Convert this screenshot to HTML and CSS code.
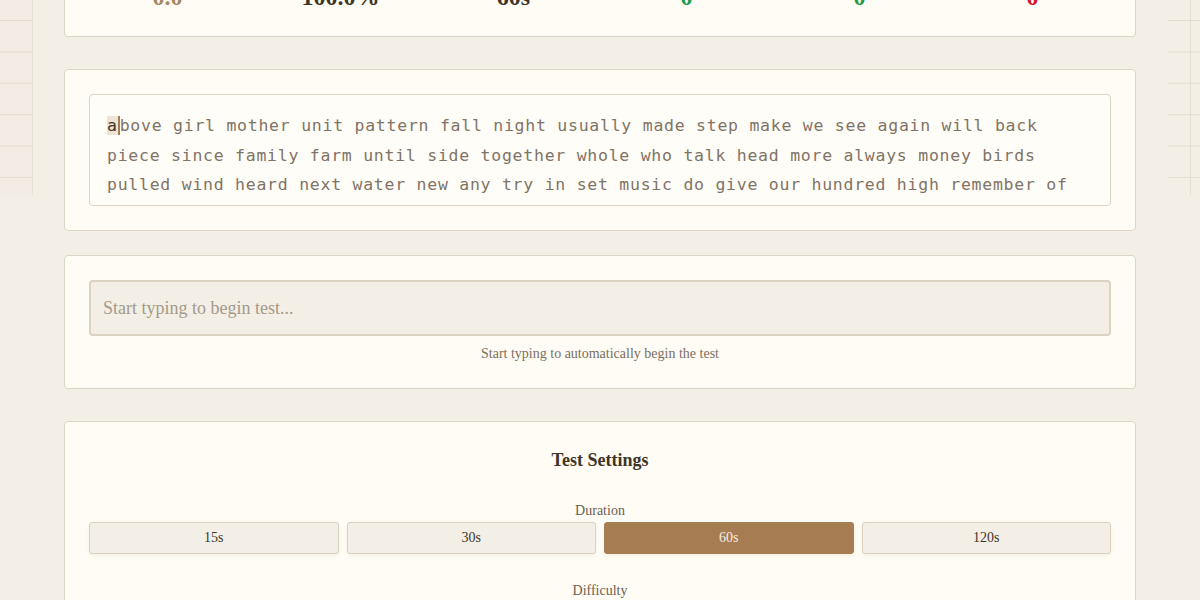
FILE: index.html
```html
<!DOCTYPE html>
<html lang="en">
<head>
    <meta charset="UTF-8">
    <meta name="viewport" content="width=device-width, initial-scale=1.0">
    <title>Typing Test</title>
    <link rel="stylesheet" href="styles.css">
</head>
<body>
    <div class="margin-lines margin-left"></div>
    <div class="margin-lines margin-right"></div>

    <main class="container">
        <section class="card stats">
            <div class="stat">
                <span class="stat-label">WPM</span>
                <span class="stat-value wpm">0.0</span>
            </div>
            <div class="stat">
                <span class="stat-label">Accuracy</span>
                <span class="stat-value">100.0%</span>
            </div>
            <div class="stat">
                <span class="stat-label">Time</span>
                <span class="stat-value">60s</span>
            </div>
            <div class="stat">
                <span class="stat-label">Words</span>
                <span class="stat-value good">0</span>
            </div>
            <div class="stat">
                <span class="stat-label">Correct</span>
                <span class="stat-value good">0</span>
            </div>
            <div class="stat">
                <span class="stat-label">Errors</span>
                <span class="stat-value bad">0</span>
            </div>
        </section>

        <section class="card text-card">
            <div class="text-display"><span class="current">a</span>bove girl mother unit pattern fall night usually made step make we see again will back piece since family farm until side together whole who talk head more always money birds pulled wind heard next water new any try in set music do give our hundred high remember of change light place work those line between start</div>
        </section>

        <section class="card input-card">
            <input type="text" class="typing-input" placeholder="Start typing to begin test...">
            <p class="hint">Start typing to automatically begin the test</p>
        </section>

        <section class="card settings">
            <h2 class="settings-title">Test Settings</h2>
            <div class="setting-group">
                <div class="setting-label">Duration</div>
                <div class="options">
                    <button class="option">15s</button>
                    <button class="option">30s</button>
                    <button class="option active">60s</button>
                    <button class="option">120s</button>
                </div>
            </div>
            <div class="setting-group">
                <div class="setting-label">Difficulty</div>
                <div class="options">
                    <button class="option">Easy</button>
                    <button class="option active">Medium</button>
                    <button class="option">Hard</button>
                    <button class="option">Expert</button>
                </div>
            </div>
        </section>
    </main>
</body>
</html>
```

FILE: styles.css
```css
html, body {
    margin: 0;
    overflow: hidden;
}
body {
    background-color: #f3efe6;
    font-family: "Liberation Serif", "Times New Roman", serif;
    color: #3d3528;
}
/* notebook paper in the page margins */
.margin-lines {
    position: absolute;
    top: 0;
    width: 32px;
    height: 195px;
    background-image: linear-gradient(#e6ddd0 1px, transparent 1px);
    background-size: 100% 31.4px;
    background-position: 0 20px;
}
.margin-left {
    left: 0;
    background-color: #f2ece4;
    border-right: 1px solid #e8e0d3;
}
.margin-right {
    right: 0;
}
.margin-right::after {
    content: "";
    position: absolute;
    top: 0;
    bottom: 0;
    left: 22px;
    width: 1px;
    background: #e6ddd0;
}
.container {
    max-width: 1072px;
    margin: -67px auto 0;
}
.card {
    background-color: #fffcf5;
    border: 1px solid #ddd5c6;
    border-radius: 4px;
    padding: 24px;
}
.stats {
    display: grid;
    grid-template-columns: repeat(6, 1fr);
    gap: 16px;
    margin-bottom: 32px;
}
.stat {
    display: flex;
    flex-direction: column;
    align-items: center;
}
.stat-label {
    font-size: 14px;
    line-height: 20px;
    color: #7a6e60;
    margin-bottom: 4px;
}
.stat-value {
    font-size: 24px;
    line-height: 30px;
    font-weight: bold;
    color: #3d3528;
}
.stat-value.wpm {
    color: #a5865e;
}
.stat-value.good {
    color: #1e9a4b;
}
.stat-value.bad {
    color: #d0142c;
}
.text-card {
    margin-bottom: 24px;
}
.text-display {
    box-sizing: border-box;
    height: 112px;
    overflow: hidden;
    padding: 16px 17px 0;
    border: 1px solid #ddd5c6;
    border-radius: 4px;
    background-color: #fffdf8;
    font-family: "DejaVu Sans Mono", monospace;
    font-size: 16.5px;
    letter-spacing: 0.74px;
    line-height: 29.5px;
    color: #7f7366;
}
.current {
    background-color: #ede4d5;
    color: #3d3528;
    border-right: 2px solid #a67c52;
}
.input-card {
    margin-bottom: 32px;
}
.typing-input {
    display: block;
    box-sizing: border-box;
    width: 100%;
    height: 56px;
    padding: 0 12px;
    border: 2px solid #dcd2c1;
    border-radius: 4px;
    background-color: #f3efe6;
    font-family: "Liberation Serif", serif;
    font-size: 18px;
    color: #3d3528;
    outline: none;
}
.typing-input::placeholder {
    color: #a59a8a;
}
.hint {
    margin: 8px 0 0;
    text-align: center;
    font-size: 14px;
    line-height: 20px;
    color: #7a6e60;
}
.settings-title {
    margin: 0 0 27px;
    text-align: center;
    font-size: 18px;
    line-height: 28px;
}
.setting-group {
    margin-bottom: 27px;
}
.setting-label {
    text-align: center;
    font-size: 14px;
    line-height: 20px;
    color: #6b5f52;
    margin-bottom: 1px;
}
.options {
    display: grid;
    grid-template-columns: repeat(4, 1fr);
    gap: 8px;
}
.option {
    height: 32px;
    border: 1px solid #dad1c1;
    border-radius: 3px;
    background-color: #f3efe6;
    box-shadow: 0 2px 4px rgba(120, 100, 70, 0.08);
    font-family: "Liberation Serif", serif;
    font-size: 14px;
    color: #3d3528;
    cursor: pointer;
}
.option.active {
    background-color: #a67c52;
    border-color: #a67c52;
    color: #f6ede2;
}
```
